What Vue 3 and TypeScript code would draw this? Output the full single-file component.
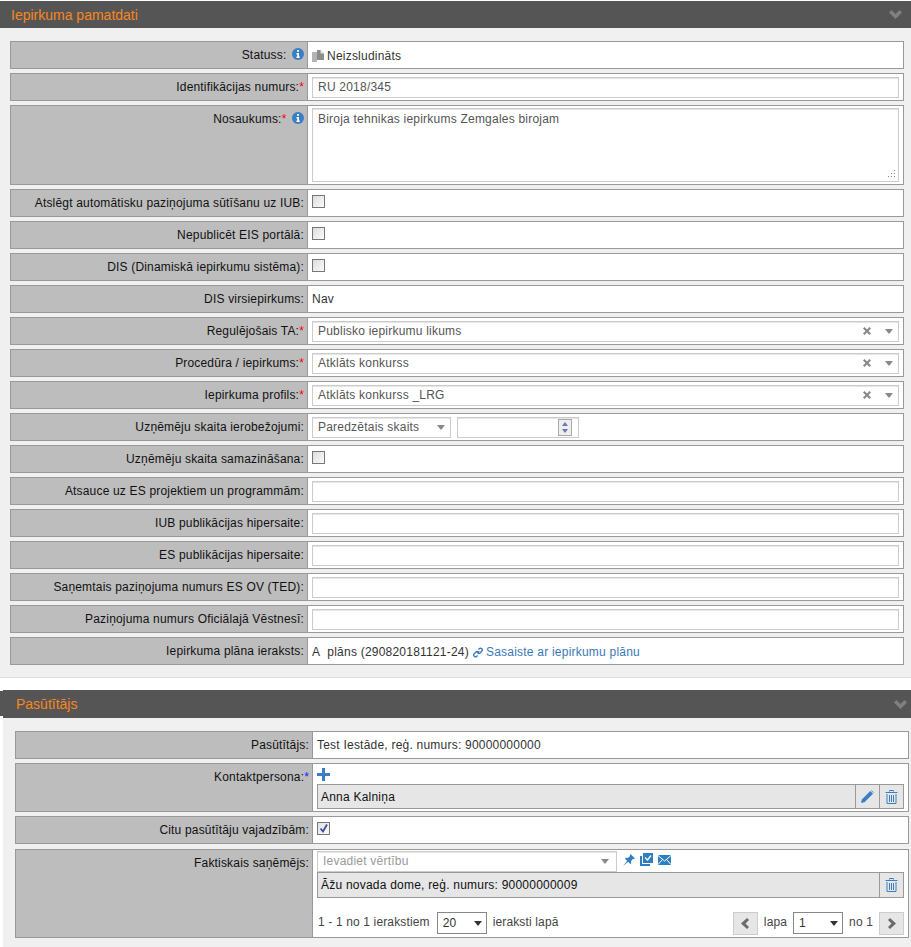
<script setup lang="ts">
type RowKind = 'input' | 'check' | 'text' | 'combo'

interface FormRow {
  label: string
  kind: RowKind
  value?: string
  required?: boolean
}

const upperRows: FormRow[] = [
  { label: 'Atslēgt automātisku paziņojuma sūtīšanu uz IUB:', kind: 'check' },
  { label: 'Nepublicēt EIS portālā:', kind: 'check' },
  { label: 'DIS (Dinamiskā iepirkumu sistēma):', kind: 'check' },
  { label: 'DIS virsiepirkums:', kind: 'text', value: 'Nav' },
  { label: 'Regulējošais TA:', kind: 'combo', value: 'Publisko iepirkumu likums', required: true },
  { label: 'Procedūra / iepirkums:', kind: 'combo', value: 'Atklāts konkurss', required: true },
  { label: 'Iepirkuma profils:', kind: 'combo', value: 'Atklāts konkurss _LRG', required: true }
]

const lowerRows: FormRow[] = [
  { label: 'Uzņēmēju skaita samazināšana:', kind: 'check' },
  { label: 'Atsauce uz ES projektiem un programmām:', kind: 'input' },
  { label: 'IUB publikācijas hipersaite:', kind: 'input' },
  { label: 'ES publikācijas hipersaite:', kind: 'input' },
  { label: 'Saņemtais paziņojuma numurs ES OV (TED):', kind: 'input' },
  { label: 'Paziņojuma numurs Oficiālajā Vēstnesī:', kind: 'input' }
]
</script>

<template>
  <div class="page">
    <header class="bar">
      <h2>Iepirkuma pamatdati</h2>
      <svg class="chev" width="13" height="9" viewBox="0 0 13 9"><path d="M0 2.500 2.500 0 6.500 4l4-4L13 2.500 6.500 9z" /></svg>
    </header>
    <section class="panel">
      <div class="row">
        <div class="lbl">Statuss: <svg class="info" viewBox="0 0 12 12"><circle cx="6" cy="6" r="6" /><path d="M5 2h2v1.700H5zM4.500 5H7v3.500h.7V10H4.500V8.500h.8V6.400h-.8z" fill="#fff" /></svg></div>
        <div class="val nudge">
          <svg class="doc" width="12" height="12" viewBox="0 0 12 12"><path d="M0 2h5v10H0z" fill="#b4b4b4" /><path d="M5 0h3.500L12 3.500V10H5z" fill="#8c8c8c" /><path d="M8.500 0v3.500H12z" fill="#e4e4e4" /></svg>
          <span>Neizsludināts</span>
        </div>
      </div>
      <div class="row">
        <div class="lbl">Identifikācijas numurs:<i>*</i></div>
        <div class="val"><div class="field">RU 2018/345</div></div>
      </div>
      <div class="row tall">
        <div class="lbl">Nosaukums:<i>*</i> <svg class="info" viewBox="0 0 12 12"><circle cx="6" cy="6" r="6" /><path d="M5 2h2v1.700H5zM4.500 5H7v3.500h.7V10H4.500V8.500h.8V6.400h-.8z" fill="#fff" /></svg></div>
        <div class="val"><div class="field area">Biroja tehnikas iepirkums Zemgales birojam
          <svg class="grip" width="8" height="8" viewBox="0 0 8 8"><path d="M7 0h1v1H7zM4 3h1v1H4zM7 3h1v1H7zM1 6h1v1H1zM4 6h1v1H4zM7 6h1v1H7z" fill="#888" /></svg>
        </div></div>
      </div>
      <div v-for="r in upperRows" :key="r.label" class="row">
        <div class="lbl">{{ r.label }}<i v-if="r.required">*</i></div>
        <div class="val">
          <span v-if="r.kind === 'check'" class="check"></span>
          <span v-else-if="r.kind === 'text'">{{ r.value }}</span>
          <div v-else class="field combo">
            <span>{{ r.value }}</span>
            <svg class="x" width="8" height="8" viewBox="0 0 8 8"><path d="M0 1.500 1.500 0 4 2.500 6.500 0 8 1.500 5.500 4 8 6.500 6.500 8 4 5.500 1.500 8 0 6.500 2.500 4z" /></svg>
            <b class="tri"></b>
          </div>
        </div>
      </div>
      <div class="row">
        <div class="lbl">Uzņēmēju skaita ierobežojumi:</div>
        <div class="val limits">
          <div class="field pick"><span>Paredzētais skaits</span><b class="tri"></b></div>
          <div class="field num">
            <div class="spin"><b class="up"></b><b class="down"></b></div>
          </div>
        </div>
      </div>
      <div v-for="r in lowerRows" :key="r.label" class="row">
        <div class="lbl">{{ r.label }}</div>
        <div class="val">
          <span v-if="r.kind === 'check'" class="check"></span>
          <div v-else class="field"></div>
        </div>
      </div>
      <div class="row">
        <div class="lbl">Iepirkuma plāna ieraksts:</div>
        <div class="val plan nudge">
          <span>A&nbsp; plāns (290820181121-24)</span>
          <svg class="link" width="10" height="11" viewBox="0 0 12 12" fill="none" stroke="#3a78b8" stroke-width="1.600"><path d="M5 7 7.500 4.500M6.500 2.500l1-1a2 2 0 0 1 3 3l-2 2a2 2 0 0 1-2.500.3M5.500 9.500l-1 1a2 2 0 0 1-3-3l2-2a2 2 0 0 1 2.500-.3" /></svg>
          <a>Sasaiste ar iepirkumu plānu</a>
        </div>
      </div>
    </section>

    <div class="second">
      <header class="bar bar2">
        <h2>Pasūtītājs</h2>
        <svg class="chev" width="13" height="9" viewBox="0 0 13 9"><path d="M0 2.500 2.500 0 6.500 4l4-4L13 2.500 6.500 9z" /></svg>
      </header>
      <section class="panel panel2">
        <div class="row">
          <div class="lbl">Pasūtītājs:</div>
          <div class="val">Test Iestāde, reģ. numurs: 90000000000</div>
        </div>
        <div class="row contact">
          <div class="lbl">Kontaktpersona:<i class="blue">*</i></div>
          <div class="val stack">
            <svg class="plus" width="13" height="13" viewBox="0 0 13 13"><path d="M5 0h3v5h5v3H8v5H5V8H0V5h5z" fill="#3a7fc1" /></svg>
            <div class="item">
              <span class="item-name">Anna Kalniņa</span>
              <span class="tool">
                <svg width="13" height="13" viewBox="0 0 13 13"><path d="M0 13l.8-3.500L9.300 1l2.700 2.700L3.500 12.200z" fill="#3a7fc1" /><path d="M10 .3l.4-.3L13 2.600l-.3.400z" fill="#3a7fc1" /></svg>
              </span>
              <span class="tool">
                <svg width="13" height="14" viewBox="0 0 13 14"><path d="M4.500 1.500V.5h4v1M.5 2.500h12M2 4v9.500h9V4M4.500 5v7M6.500 5v7M8.500 5v7" fill="none" stroke="#3a7fc1" /></svg>
              </span>
            </div>
          </div>
        </div>
        <div class="row citu">
          <div class="lbl">Citu pasūtītāju vajadzībām:</div>
          <div class="val">
            <span class="check on"><svg width="11" height="11" viewBox="0 0 11 11"><path d="M2.500 5.500 5 8.500 9 1.500" fill="none" stroke="#3b4f9a" stroke-width="1.800" /></svg></span>
          </div>
        </div>
        <div class="row receiver">
          <div class="lbl">Faktiskais saņēmējs:</div>
          <div class="val stack">
            <div class="pick-line">
              <div class="field search"><span>Ievadiet vērtību</span><b class="tri"></b></div>
              <div class="mini">
                <svg width="12" height="12" viewBox="0 0 12 12"><path d="M7.500 0 12 4.500 11 5.200 10 4.800 8 7.200 8.300 9.200 7.300 10 2 4.700 2.800 3.700 4.800 4 7.200 2 6.800 1z" fill="#2f7fc0" /><path d="M0 12 4.500 6.500 5.500 7.500z" fill="#2f7fc0" /></svg>
                <svg width="13" height="13" viewBox="0 0 13 13"><path d="M0 3h2v8h8v2H0z" fill="#2f7fc0" /><path d="M3 0h10v10H3z" fill="#2f7fc0" /><path d="M5 4.500 7.500 7 11 2.500" fill="none" stroke="#fff" stroke-width="1.300" /></svg>
                <svg width="13" height="10" viewBox="0 0 13 10"><path d="M0 0h13v10H0z" fill="#2f7fc0" /><path d="M0 .5 6.500 6 13 .5M0 9.500 4.500 4.500M13 9.500 8.500 4.500" fill="none" stroke="#fff" /></svg>
              </div>
            </div>
            <div class="item item-single">
              <span class="item-name">Āžu novada dome, reģ. numurs: 90000000009</span>
              <span class="tool">
                <svg width="13" height="14" viewBox="0 0 13 14"><path d="M4.500 1.500V.5h4v1M.5 2.500h12M2 4v9.500h9V4M4.500 5v7M6.500 5v7M8.500 5v7" fill="none" stroke="#3a7fc1" /></svg>
              </span>
            </div>
            <div class="pager">
              <span class="pager-text">1 - 1 no 1 ierakstiem</span>
              <div class="size"><span>20</span><b class="tri dark"></b></div>
              <span class="pager-text">ieraksti lapā</span>
              <div class="nav">
                <button class="nav-btn"><svg width="8" height="11" viewBox="0 0 8 11"><path d="M6 0l2 2-3.500 3.500L8 9l-2 2L0 5.500z" fill="#6b6b6b" /></svg></button>
                <span class="pager-text">lapa</span>
                <div class="size page-no"><span>1</span><b class="tri dark"></b></div>
                <span class="pager-text">no 1</span>
                <button class="nav-btn"><svg width="8" height="11" viewBox="0 0 8 11"><path d="M2 0 0 2l3.500 3.500L0 9l2 2 6-5.500z" fill="#6b6b6b" /></svg></button>
              </div>
            </div>
          </div>
        </div>
      </section>
    </div>
  </div>
</template>

<style>
body {
  background: #f0f0f0;
}
</style>

<style scoped>
.page {
  width: 911px;
  height: 947px;
  padding-top: 1px;
  box-sizing: border-box;
  background: #fff;
  font-family: "Liberation Sans", Arial, sans-serif;
  font-size: 12px;
  line-height: 14px;
  letter-spacing: 0.22px;
  color: #333;
  overflow: hidden;
}

.bar {
  height: 27px;
  background: #555;
  display: flex;
  align-items: center;
  justify-content: space-between;
  padding: 0 9px 0 11px;
}

.bar h2 {
  margin: 0;
  font-size: 14px;
  font-weight: 400;
  letter-spacing: 0;
  color: #f7861e;
}

.chev {
  fill: #808080;
}

.panel {
  height: 650px;
  box-sizing: border-box;
  background: #f0f0f0;
  border-bottom: 1px solid #ddd;
  padding: 13px 7px 0 10px;
  display: flex;
  flex-direction: column;
  gap: 4px;
}

.second {
  margin-top: 12px;
  margin-left: 3px;
  position: relative;
}

.second::before {
  content: "";
  position: absolute;
  left: -3px;
  top: 1px;
  width: 3px;
  height: 25px;
  background: #555;
}

.bar2 {
  height: 28px;
  padding: 0 4px 0 13px;
}

.panel2 {
  height: 229px;
  border-bottom: none;
  padding: 13px 2px 0 12px;
}

.row {
  display: grid;
  grid-template-columns: 297px 1fr;
  height: 28px;
  box-sizing: border-box;
  border: 1px solid #999;
  background: #fff;
}

.tall {
  height: 80px;
}

.contact {
  height: 49px;
}

.citu {
  margin-bottom: 1px;
}

.receiver {
  height: 89px;
}

.lbl {
  background: #bdbdbd;
  border-right: 1px solid #999;
  color: #111;
  text-align: right;
  padding: 6px 3px 0 0;
  letter-spacing: 0.18px;
}

.lbl i {
  font-style: normal;
  color: #f00;
}

.lbl i.blue {
  color: #22f;
}

.info {
  width: 12px;
  height: 12px;
  margin-left: 2px;
  vertical-align: -1px;
  fill: #3a7fc1;
}

.val {
  min-width: 0;
  padding: 0 4px;
  display: flex;
  align-items: center;
}

.nudge {
  padding-top: 2px;
}

.doc {
  margin-right: 3px;
}

.field {
  flex: 1;
  height: 21px;
  box-sizing: border-box;
  border: 1px solid #ccc;
  box-shadow: inset 0 1px 1px #e4e4e4;
  background: #fff;
  color: #555;
  padding: 2px 5px;
  position: relative;
}

.area {
  height: 74px;
  padding-top: 3px;
}

.grip {
  position: absolute;
  right: 3px;
  bottom: 3px;
}

.check {
  width: 13px;
  height: 13px;
  box-sizing: border-box;
  border: 1px solid #767676;
  background: linear-gradient(135deg, #ddd, #fafafa);
  display: block;
  align-self: flex-start;
  margin-top: 5px;
}

.check.on {
  background: linear-gradient(135deg, #e2e2e2, #fafafa);
}

.check.on svg {
  display: block;
}

.combo,
.pick,
.search {
  display: flex;
  align-items: flex-start;
}

.combo span,
.pick span,
.search span {
  flex: 1;
}

.x {
  fill: #888;
  margin: 3px 14px 0 0;
}

.tri {
  display: block;
  width: 0;
  height: 0;
  border-left: 4px solid transparent;
  border-right: 4px solid transparent;
  border-top: 5px solid #888;
  margin-top: 5px;
}

.tri.dark {
  border-top-color: #333;
  margin-top: 0;
}

.search .tri {
  margin-right: 2px;
}

.limits {
  gap: 6px;
}

.pick {
  flex: none;
  width: 139px;
}

.num {
  flex: none;
  width: 122px;
}

.spin {
  position: absolute;
  right: 6px;
  top: 1px;
  width: 14px;
  height: 17px;
  box-sizing: border-box;
  border: 1px solid #aaa;
  background: #eee;
}

.spin b {
  position: absolute;
  left: 3px;
  width: 0;
  height: 0;
  border-left: 3px solid transparent;
  border-right: 3px solid transparent;
}

.spin .up {
  top: 2px;
  border-bottom: 4px solid #6a78b8;
}

.spin .down {
  bottom: 2px;
  border-top: 4px solid #6a78b8;
}

.plan a {
  color: #3a78b8;
  margin-left: 3px;
}

.link {
  margin-left: 4px;
}

.stack {
  flex-direction: column;
  align-items: stretch;
  padding: 0;
  position: relative;
}

.plus {
  display: block;
  margin: 4px 0 3px 4px;
}

.item {
  margin-left: 4px;
  margin-right: 4px;
  height: 25px;
  box-sizing: border-box;
  border: 1px solid #999;
  background: #e6e6e6;
  color: #111;
  display: flex;
  align-items: stretch;
}

.item-name {
  flex: 1;
  padding: 5px 3px 0;
}

.tool {
  width: 23px;
  border-left: 1px solid #999;
  display: flex;
  align-items: center;
  justify-content: center;
}

.pick-line {
  display: flex;
  align-items: flex-start;
  margin: 1px 0 0 4px;
}

.search {
  flex: none;
  width: 300px;
  color: #999;
}

.mini {
  display: flex;
  gap: 5px;
  align-items: center;
  margin: 2px 0 0 6px;
}

.item-single {
  height: 26px;
}

.pager {
  display: flex;
  align-items: center;
  margin: 13px 4px 0 5px;
  color: #444;
  height: 24px;
  letter-spacing: 0.14px;
}

.pager-text {
  padding-bottom: 2px;
}

.size {
  width: 50px;
  height: 22px;
  box-sizing: border-box;
  border: 1px solid #888;
  background: #fff;
  color: #333;
  display: flex;
  align-items: center;
  justify-content: space-between;
  padding: 0 4px 0 5px;
  margin: 0 6px 0 7px;
}

.nav {
  margin-left: auto;
  display: flex;
  align-items: center;
  gap: 6px;
}

.page-no {
  margin: 0;
}

.nav-btn {
  width: 25px;
  height: 23px;
  padding: 0;
  border: 1px solid #ccc;
  background: #e6e6e6;
  display: flex;
  align-items: center;
  justify-content: center;
}
</style>
